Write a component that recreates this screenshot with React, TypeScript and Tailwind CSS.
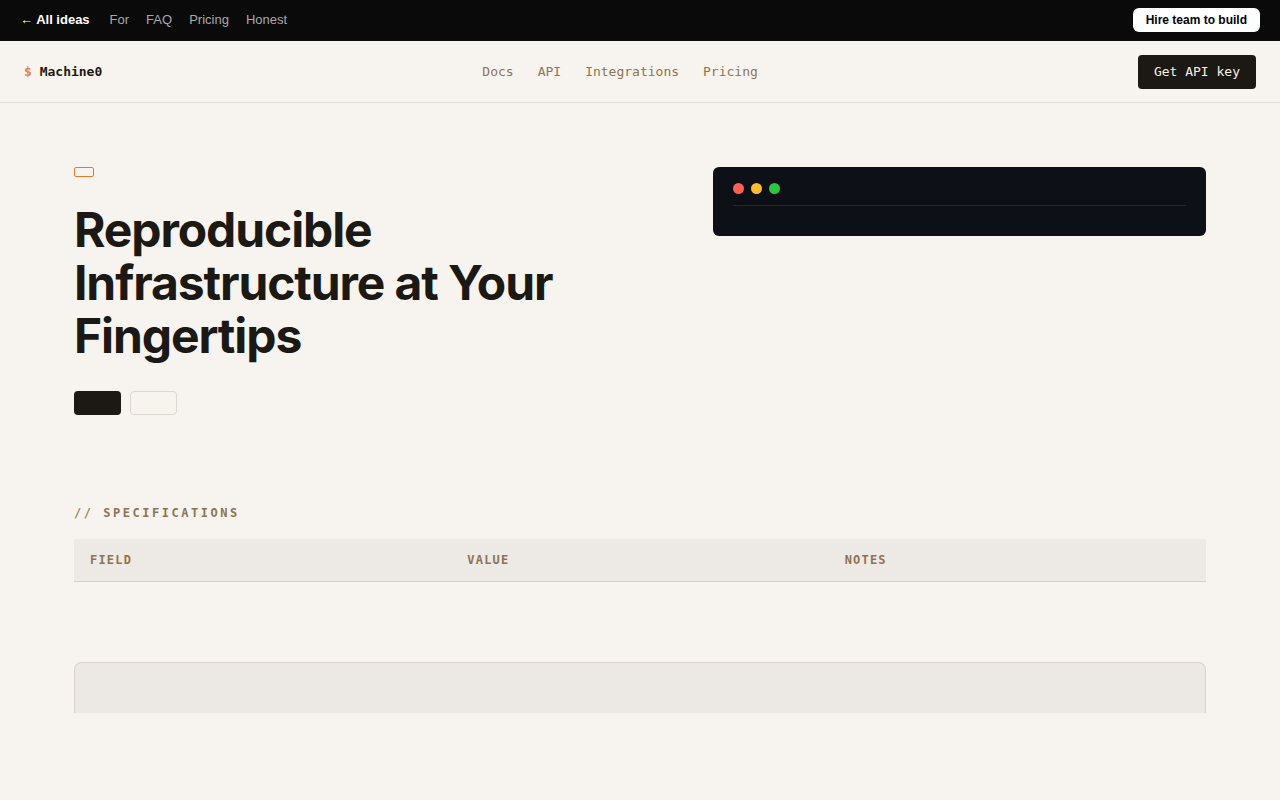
import React from "react";

const mono = { fontFamily: '"DejaVu Sans Mono", "Liberation Mono", monospace' };

export default function App() {
  return (
    <div className="min-h-[800px] bg-[#f7f4ef] text-[#1c1915]">
      {/* Top bar */}
      <div className="flex h-[41px] items-center justify-between bg-[#0a0a0a] pb-px pl-5 pr-5 text-[13px]" style={{ fontFamily: '"Liberation Sans", Arial, sans-serif' }}>
        <div className="flex items-center gap-[17px]">
          <a className="mr-[3px] font-bold text-white">← All ideas</a>
          <a className="text-[#a8a8a8]">For</a>
          <a className="text-[#a8a8a8]">FAQ</a>
          <a className="text-[#a8a8a8]">Pricing</a>
          <a className="text-[#a8a8a8]">Honest</a>
        </div>
        <button className="flex h-6 items-center rounded-md bg-white px-[13px] text-[12px] font-bold text-black">Hire team to build</button>
      </div>

      {/* Nav */}
      <div className="flex h-[62px] items-center justify-between border-b border-[#e2ddd5] px-6 text-[13px]" style={mono}>
        <div className="font-bold"><span className="text-[#e8804a]">$</span> Machine0</div>
        <div className="flex items-center gap-6 text-[#8f7352]">
          <a>Docs</a>
          <a>API</a>
          <a>Integrations</a>
          <a>Pricing</a>
        </div>
        <button className="h-[34px] rounded-[4px] bg-[#1c1915] px-4 text-[13px] text-[#f5f0e8]">Get API key</button>
      </div>

      <div className="mx-auto w-[1132px]">
        {/* Hero */}
        <div className="flex justify-between pt-16">
          <div className="flex flex-col items-start">
            <span className="h-[10px] w-5 rounded-[2px] border border-[#e8792a]"></span>
            <h1 className="mt-[26px] text-[48px] font-bold leading-[53px] tracking-[-0.023em] text-[#1c1915]" style={{ fontFamily: 'Inter, "Noto Sans", sans-serif' }}>
              Reproducible<br />Infrastructure at Your<br />Fingertips
            </h1>
            <div className="mt-[29px] flex gap-[9px]">
              <button className="h-6 w-[47px] rounded-[4px] bg-[#1c1915]"></button>
              <button className="h-6 w-[47px] rounded-[4px] border border-[#dcd7cf]"></button>
            </div>
          </div>
          <div className="h-[69px] w-[493px] rounded-[6px] bg-[#0d1017] px-5 pt-4">
            <div className="flex gap-[7px] border-b border-[#23272f] pb-[11px]">
              <span className="h-[11px] w-[11px] rounded-full bg-[#ff5f57]"></span>
              <span className="h-[11px] w-[11px] rounded-full bg-[#febc2e]"></span>
              <span className="h-[11px] w-[11px] rounded-full bg-[#28c840]"></span>
            </div>
          </div>
        </div>

        {/* Specifications */}
        <div className="mt-[89px]" style={mono}>
          <div className="text-[12px] font-bold tracking-[0.21em] text-[#8f7352]"><span className="text-[#a0825a]">//</span> SPECIFICATIONS</div>
          <div className="mt-[17px] grid grid-cols-3 border-b border-[#d8d2ca] bg-[#edeae5] text-[12px] font-bold tracking-[0.1em] text-[#8f7352]">
            <div className="px-4 py-[12px]">FIELD</div>
            <div className="px-4 py-[12px]">VALUE</div>
            <div className="px-4 py-[12px]">NOTES</div>
          </div>
        </div>

        <div className="mt-20 h-[51px] rounded-t-lg border border-b-0 border-[#d8d2ca] bg-[#ece9e4]"></div>
      </div>
    </div>
  );
}
